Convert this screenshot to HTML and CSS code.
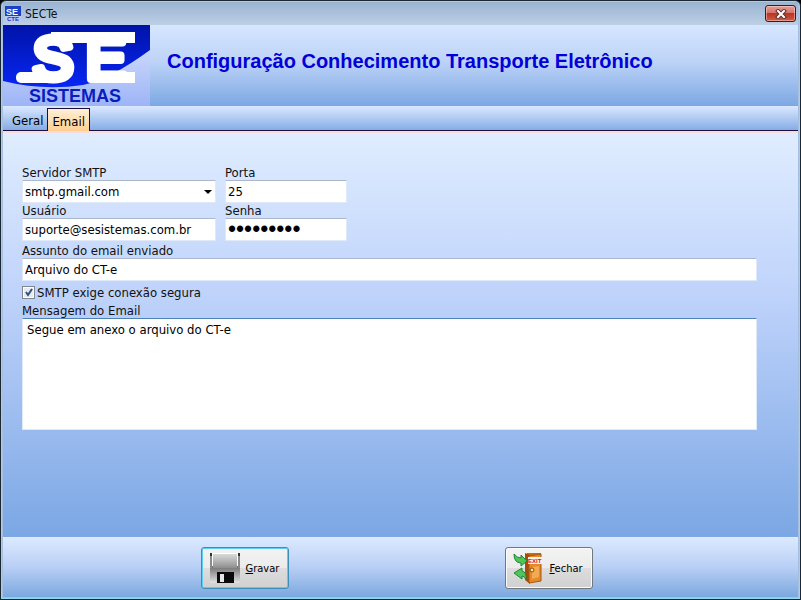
FILE: index.html
```html
<!DOCTYPE html>
<html lang="pt-BR">
<head>
  <meta charset="UTF-8" />
  <meta name="viewport" content="width=device-width, initial-scale=1" />
  <title>SECTe</title>
  <link rel="stylesheet" href="styles.css">
</head>
<body>
  <div class="window">
    <header class="titlebar">
      <svg class="app-icon" viewBox="0 0 16 16" aria-hidden="true">
        <rect width="16" height="10" fill="#1c3fc4"/>
        <rect y="10" width="16" height="6" fill="#b9c9f3"/>
        <text class="icon-se" x="1" y="9">SE</text>
        <text class="icon-cte" x="2" y="15">CTE</text>
      </svg>
      <span class="titlebar-text">SECTe</span>
      <button class="btn-close" type="button" aria-label="Fechar janela">
        <svg width="12" height="10" viewBox="0 0 12 10">
          <path d="M3 2 L9 8 M9 2 L3 8" stroke="#5b3434" stroke-width="4" stroke-linecap="square"/>
          <path d="M3 2 L9 8 M9 2 L3 8" stroke="#fff" stroke-width="2" stroke-linecap="square"/>
        </svg>
      </button>
    </header>

    <div class="banner">
      <svg class="logo" width="147" height="81" viewBox="0 0 147 81" role="img" aria-label="SE Sistemas">
        <defs>
          <linearGradient id="azul" x1="0" y1="0" x2="0" y2="1">
            <stop offset="0" stop-color="#0013a8"/>
            <stop offset="1" stop-color="#0826f4"/>
          </linearGradient>
          <linearGradient id="claro" x1="0" y1="0" x2="0" y2="1">
            <stop offset="0" stop-color="#dfe8ff"/>
            <stop offset="1" stop-color="#9db4f6"/>
          </linearGradient>
        </defs>
        <rect width="147" height="81" fill="url(#claro)"/>
        <path d="M0 0 H147 V25 Q106 55 80 60 Q40 66 0 56 Z" fill="url(#azul)"/>
        <rect x="13" y="47" width="40" height="11" rx="5" fill="#fff"/>
        <rect x="48" y="7" width="84" height="11" fill="#fff"/>
        <rect x="92" y="47" width="40" height="11" fill="#fff"/>
        <text class="logo-se" x="30" y="54">S</text>
        <text class="logo-se" x="83" y="54">E</text>
        <text class="logo-name" x="26" y="77">SISTEMAS</text>
      </svg>
      <h1>Configuração Conhecimento Transporte Eletrônico</h1>
    </div>

    <nav class="tabs" role="tablist">
      <button class="tab" type="button" role="tab" aria-selected="false">Geral</button>
      <button class="tab active" type="button" role="tab" aria-selected="true">Email</button>
    </nav>

    <form class="config" id="config">
      <div class="fields">
        <div class="field">
          <label for="servidor">Servidor SMTP</label>
          <select id="servidor">
            <option>smtp.gmail.com</option>
          </select>
        </div>
        <div class="field">
          <label for="porta">Porta</label>
          <input type="text" id="porta" value="25">
        </div>
        <div class="field">
          <label for="usuario">Usuário</label>
          <input type="text" id="usuario" value="suporte@sesistemas.com.br">
        </div>
        <div class="field">
          <label for="senha">Senha</label>
          <input type="password" class="senha" id="senha" value="123456789">
        </div>
      </div>
      <div class="field">
        <label for="assunto">Assunto do email enviado</label>
        <input type="text" id="assunto" value="Arquivo do CT-e">
      </div>
      <div class="check">
        <input type="checkbox" id="segura" checked>
        <label for="segura">SMTP exige conexão segura</label>
      </div>
      <div class="field">
        <label for="mensagem">Mensagem do Email</label>
        <textarea id="mensagem">Segue em anexo o arquivo do CT-e</textarea>
      </div>
    </form>

    <footer class="actions">
      <button class="btn btn-default" type="submit" form="config">
        <svg width="32" height="32" viewBox="0 0 32 32" aria-hidden="true">
          <defs>
            <linearGradient id="metal" x1="0" y1="0" x2="0" y2="1">
              <stop offset="0" stop-color="#d8dcd8"/>
              <stop offset="0.5" stop-color="#b4b6b4"/>
              <stop offset="1" stop-color="#8d8d8d"/>
            </linearGradient>
            <linearGradient id="corpo" x1="0" y1="0" x2="0" y2="1">
              <stop offset="0" stop-color="#6e6e6e"/>
              <stop offset="1" stop-color="#e2e2e2"/>
            </linearGradient>
          </defs>
          <path d="M1 1 H31 V29 L29 31 H3 L1 29 Z" fill="#fff"/>
          <path d="M1 14 H31 V29 L29 31 H3 L1 29 Z" fill="url(#corpo)"/>
          <rect x="1" y="1" width="2" height="15" fill="#8a8a8a"/>
          <rect x="29" y="1" width="2" height="15" fill="#8a8a8a"/>
          <rect x="1" y="1" width="2" height="3" fill="#333"/>
          <rect x="29" y="1" width="2" height="3" fill="#333"/>
          <rect x="4" y="2" width="24" height="14" fill="url(#metal)"/>
          <rect x="8" y="20" width="17" height="11" fill="#0b0b0b"/>
          <rect x="11" y="22" width="4" height="8" fill="#e8e8e8"/>
        </svg>
        <span><u>G</u>ravar</span>
      </button>
      <button class="btn" type="button">
        <svg width="32" height="32" viewBox="0 0 32 32" aria-hidden="true">
          <path d="M14 1 H28 V28 H14 Z" fill="#c96a17"/>
          <path d="M12 1 L17 3 V32 L12 28 Z" fill="#a44c0c"/>
          <path d="M16 4 L28 2 V29 L16 31 Z" fill="#e48a2a" stroke="#a9560f"/>
          <path d="M19 15 L26 14 V25 L19 27 Z" fill="#f3aa50"/>
          <rect x="15" y="5" width="14" height="7" fill="#fff0ea"/>
          <text class="exit-text" x="15" y="11">EXIT</text>
          <circle cx="19" cy="18" r="2" fill="#ffe38c" stroke="#8a4a0b"/>
          <path d="M1 2 Q4 6 8 6 V3 L14 9 L8 14 V11 Q1 11 1 2 Z" fill="#4fc657" stroke="#23853a"/>
          <path d="M13 28 Q12 24 9 24 V27 L1 21 L9 16 V19 Q14 20 13 28 Z" fill="#4fc657" stroke="#23853a"/>
        </svg>
        <span><u>F</u>echar</span>
      </button>
    </footer>
  </div>

  <script>
    // cursor no fim da mensagem
    const mensagem = document.getElementById('mensagem');
    mensagem.focus();
    mensagem.setSelectionRange(mensagem.value.length, mensagem.value.length);
  </script>
</body>
</html>
```
FILE: styles.css
```css
* {
  box-sizing: border-box;
}
body {
  margin: 0;
  background: #000;
  color: #111;
  font-family: "DejaVu Sans Condensed", "DejaVu Sans", sans-serif;
  font-size: 13px;
}
button, input, select, textarea {
  font: inherit;
  color: #000;
}
.window {
  display: flex;
  flex-direction: column;
  min-height: 100vh;
  border: 1px solid #1b2733;
  border-radius: 6px 6px 0 0;
  box-shadow: inset 0 0 0 1px #8fd9f5;
  background: #a4bfdf;
  padding: 1px 2px 2px 2px;
}
.titlebar {
  display: flex;
  align-items: center;
  height: 23px;
  padding: 0 2px;
  gap: 4px;
  background: linear-gradient(#9ab4d0, #bccfe6);
}
.app-icon {
  width: 16px;
  height: 16px;
}
.icon-se {
  font: bold 9px "Liberation Sans", Arial, sans-serif;
  fill: #fff;
}
.icon-cte {
  font: bold 6px "Liberation Sans", Arial, sans-serif;
  fill: #1c2fc4;
}
.titlebar-text {
  flex: 1;
  font-size: 12px;
}
.btn-close {
  display: flex;
  align-items: center;
  justify-content: center;
  width: 31px;
  height: 17px;
  padding: 0;
  border: 1px solid #4a1515;
  border-radius: 3px;
  background: linear-gradient(#e5a097, #d5746a 45%, #b93422 50%, #cf5c45);
  box-shadow: inset 0 0 0 1px rgba(255, 220, 210, 0.5);
}
.banner {
  display: flex;
  align-items: center;
  gap: 17px;
  height: 81px;
  background: linear-gradient(#d6e6ff, #bdd3f7 45%, #7ca8e3);
}
.logo {
  flex: none;
}
.logo-se {
  font: 60px "Liberation Sans", Arial, sans-serif;
  fill: #fff;
  stroke: #fff;
  stroke-width: 8px;
  stroke-linejoin: round;
}
.logo-name {
  font: bold 18px "Liberation Sans", Arial, sans-serif;
  fill: #0a1cc0;
}
h1 {
  margin: 0 0 8px;
  color: #0000d8;
  font: bold 20px "Liberation Sans", Arial, sans-serif;
}
.tabs {
  display: flex;
  align-items: flex-end;
  height: 25px;
  padding: 2px 0 0 5px;
  border-bottom: 1px solid #1a1040;
  background: linear-gradient(#dbe9ff, #86ade6);
}
.tab {
  height: 22px;
  padding: 3px 4px 0;
  border: 0;
  background: none;
}
.tab.active {
  height: 23px;
  margin-bottom: -1px;
  border: 1px solid #1a1040;
  border-bottom: 0;
  background: linear-gradient(#fff0d8, #ffcf92);
}
.config {
  flex: 1;
  padding: 32px 41px 20px 19px;
  border-top: 2px solid #f6dcdc;
  background: linear-gradient(#e0edff, #bfd3fb 40%, #7ba7e4);
}
.fields {
  display: grid;
  grid-template-columns: 194px 122px;
  column-gap: 9px;
  margin-bottom: 2px;
}
.field label {
  display: block;
  line-height: 15px;
}
.field input, .field select, .field textarea {
  display: block;
  width: 100%;
  height: 23px;
  padding: 0 2px;
  border: 1px solid #dfe9f7;
  border-top-color: #abb8cc;
  border-radius: 1px;
  outline: 0;
  background: #fff;
}
.field select {
  appearance: none;
  background: #fff url("data:image/svg+xml,%3Csvg xmlns='http://www.w3.org/2000/svg' width='8' height='4'%3E%3Cpath d='M0 0H8L4 4Z'/%3E%3C/svg%3E") no-repeat right 3px center;
}
.field .senha {
  font: 23px "Liberation Sans", Arial, sans-serif;
}
.field textarea {
  height: 112px;
  padding: 3px 4px;
  border-top-color: #4f83b8;
  resize: none;
}
.check {
  display: flex;
  align-items: center;
  gap: 2px;
  height: 22px;
}
.check input {
  appearance: none;
  width: 13px;
  height: 13px;
  margin: 0;
  border: 1px solid #7d8794;
  background: #e6ebf2 url("data:image/svg+xml,%3Csvg xmlns='http://www.w3.org/2000/svg' width='9' height='9'%3E%3Cpath d='M2 4L4 7L8 1' fill='none' stroke='%23344f80' stroke-width='2'/%3E%3C/svg%3E") no-repeat center;
  box-shadow: inset 0 0 0 1px #fff;
}
.actions {
  display: flex;
  justify-content: center;
  gap: 216px;
  height: 60px;
  padding: 10px 8px 8px 0;
  background: linear-gradient(#dceaff, #b9cff5 50%, #7ba8de);
}
.btn {
  display: flex;
  align-items: center;
  gap: 5px;
  width: 88px;
  height: 42px;
  padding: 0 7px;
  border: 1px solid #70777f;
  border-radius: 3px;
  background: linear-gradient(#f3f3f3, #ebebeb 50%, #dddddd 50%, #d0d0d0);
  box-shadow: inset 0 0 0 1px #fafafa;
  font-size: 11px;
}
.btn-default {
  border-color: #3c8fb8;
  box-shadow: inset 0 0 0 1px #5ccdf2;
}
.exit-text {
  font: bold 6px "Liberation Sans", Arial, sans-serif;
  fill: #d3172e;
}
```
